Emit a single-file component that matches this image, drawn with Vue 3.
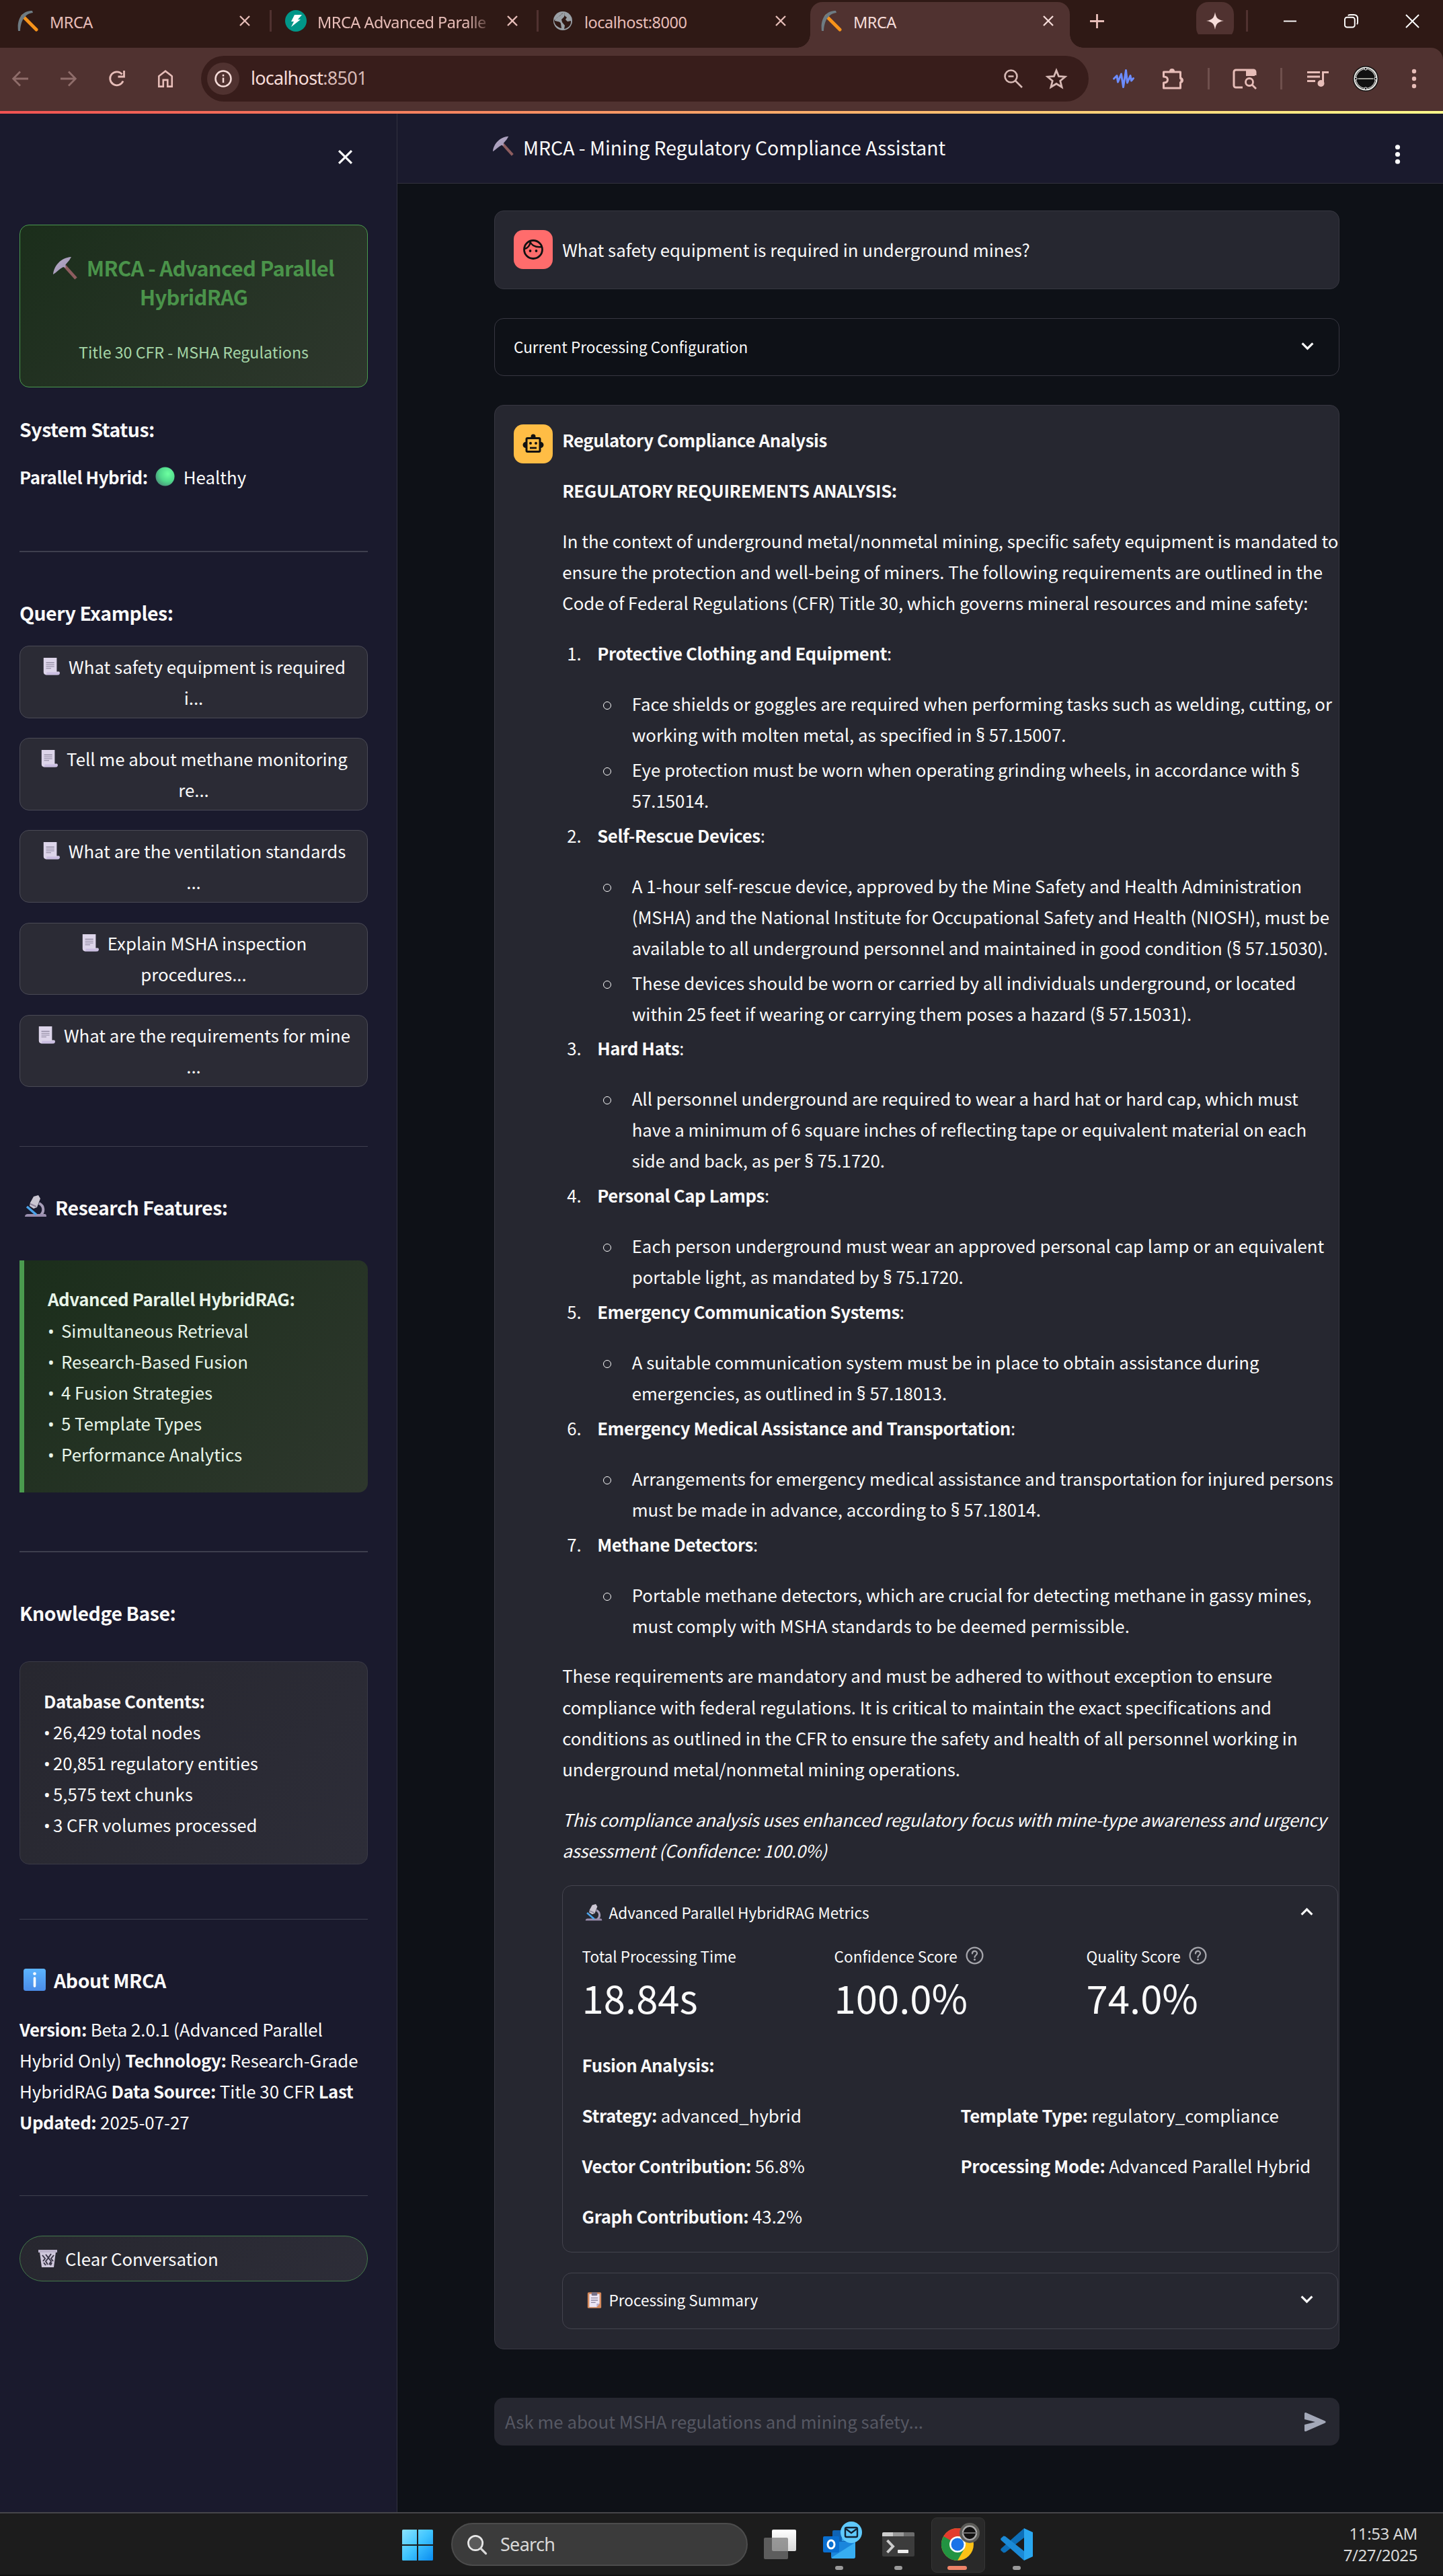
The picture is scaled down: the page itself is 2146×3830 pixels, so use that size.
<script setup>
const tabs = [
  { title: 'MRCA', icon: 'pick-tab', cls: 't1' },
  { title: 'MRCA Advanced Paralle', icon: 'bolt', cls: 't2' },
  { title: 'localhost:8000', icon: 'globe', cls: 't3' },
  { title: 'MRCA', icon: 'pick-tab', cls: 'active' },
]

const examples = [
  ['What safety equipment is required', 'i...'],
  ['Tell me about methane monitoring', 're...'],
  ['What are the ventilation standards', '...'],
  ['Explain MSHA inspection', 'procedures...'],
  ['What are the requirements for mine', '...'],
]

const features = ['Simultaneous Retrieval', 'Research-Based Fusion', '4 Fusion Strategies', '5 Template Types', 'Performance Analytics']
const database = ['26,429 total nodes', '20,851 regulatory entities', '5,575 text chunks', '3 CFR volumes processed']

const requirements = [
  { title: 'Protective Clothing and Equipment', items: [
    ['Face shields or goggles are required when performing tasks such as welding, cutting, or', 'working with molten metal, as specified in § 57.15007.'],
    ['Eye protection must be worn when operating grinding wheels, in accordance with §', '57.15014.'],
  ] },
  { title: 'Self-Rescue Devices', items: [
    ['A 1-hour self-rescue device, approved by the Mine Safety and Health Administration', '(MSHA) and the National Institute for Occupational Safety and Health (NIOSH), must be', 'available to all underground personnel and maintained in good condition (§ 57.15030).'],
    ['These devices should be worn or carried by all individuals underground, or located', 'within 25 feet if wearing or carrying them poses a hazard (§ 57.15031).'],
  ] },
  { title: 'Hard Hats', items: [
    ['All personnel underground are required to wear a hard hat or hard cap, which must', 'have a minimum of 6 square inches of reflecting tape or equivalent material on each', 'side and back, as per § 75.1720.'],
  ] },
  { title: 'Personal Cap Lamps', items: [
    ['Each person underground must wear an approved personal cap lamp or an equivalent', 'portable light, as mandated by § 75.1720.'],
  ] },
  { title: 'Emergency Communication Systems', items: [
    ['A suitable communication system must be in place to obtain assistance during', 'emergencies, as outlined in § 57.18013.'],
  ] },
  { title: 'Emergency Medical Assistance and Transportation', items: [
    ['Arrangements for emergency medical assistance and transportation for injured persons', 'must be made in advance, according to § 57.18014.'],
  ] },
  { title: 'Methane Detectors', items: [
    ['Portable methane detectors, which are crucial for detecting methane in gassy mines,', 'must comply with MSHA standards to be deemed permissible.'],
  ] },
]

const metrics = [
  { label: 'Total Processing Time', value: '18.84s', help: false },
  { label: 'Confidence Score', value: '100.0%', help: true },
  { label: 'Quality Score', value: '74.0%', help: true },
]
</script>

<template>
  <div class="screen">
    <svg class="defs" width="0" height="0">
      <defs>
        <linearGradient id="steel" x1="0" y1="0" x2="1" y2="1"><stop offset="0" stop-color="#b9adc9" /><stop offset="1" stop-color="#9a8fb0" /></linearGradient>
        <linearGradient id="win" x1="0" y1="0" x2="1" y2="1"><stop offset="0" stop-color="#8be4ff" /><stop offset="0.5" stop-color="#3fc4ff" /><stop offset="1" stop-color="#0a8cf0" /></linearGradient>
        <linearGradient id="info" x1="0" y1="0" x2="0" y2="1"><stop offset="0" stop-color="#5cb4ff" /><stop offset="1" stop-color="#4a8ce8" /></linearGradient>
        <radialGradient id="green" cx=".65" cy=".35" r=".7"><stop offset="0" stop-color="#6dffa0" /><stop offset=".6" stop-color="#50d98c" /><stop offset="1" stop-color="#4b9a7c" /></radialGradient>
        <linearGradient id="white" x1="0" y1="0" x2="0" y2="1"><stop offset="0" stop-color="#ffffff" /><stop offset="1" stop-color="#d8d8d8" /></linearGradient>
      </defs>
      <symbol id="pick-tab" viewBox="0 0 32 32"><path d="M8 9 28 29" stroke="#f7931a" stroke-width="5" stroke-linecap="round" /><path d="M1 31C-1 14 6 1 22 1l1 3C13 5 5 13 4 31z" fill="#6d7b83" /></symbol>
      <symbol id="pick" viewBox="0 0 36 36"><path d="M16 13 34 33" stroke="#8d5d5f" stroke-width="4.600" /><path d="M0 27C1 15 11 2 27 1L24 6l-6 7 1 4-4-1C9 19 5 24 0 27z" fill="url(#steel)" /></symbol>
      <symbol id="bolt" viewBox="0 0 32 32"><circle cx="16" cy="16" r="16" fill="#009688" /><path d="M14 7h11l-6 7h4L9 25l4-8H9z" fill="#fff" /></symbol>
      <symbol id="globe" viewBox="0 0 32 32"><circle cx="16" cy="16" r="14" fill="#9aa0a6" /><path d="M17 4c-5 2-3 4-6 5-3 2-7 4-7 7 5 1 8 1 9 4l1 7c-6-1-11-6-11-12M19 4c-2 4 1 5 3 7l-2 3 3 3 5-1c1 6-4 11-10 12l1-5-4-5-1-4 4-4z" fill="#2f1915" /></symbol>
      <symbol id="x" viewBox="0 0 20 20"><path d="M3 3l14 14M17 3 3 17" fill="none" stroke="currentColor" stroke-width="2.300" /></symbol>
      <symbol id="chev" viewBox="0 0 20 20"><path d="M2.500 6 10 13.500 17.500 6" fill="none" stroke="currentColor" stroke-width="3" /></symbol>
      <symbol id="dots" viewBox="0 0 24 24"><circle cx="12" cy="6" r="2" /><circle cx="12" cy="12" r="2" /><circle cx="12" cy="18" r="2" /></symbol>
      <symbol id="scroll" viewBox="0 0 30 30"><path d="M3 1h21v22h4c1 5-2 5-4 5H8c-3 0-5-1-5-4z" fill="#ddd5ea" /><path d="M8 24h21c0 3-1 4.500-4 4.500H5c2 0 3-2 3-4.500z" fill="#cbbfe2" /><path d="M7 9h13M7 12h13M7 15h13M7 18h8" stroke="#8a849b" stroke-width="1.200" /></symbol>
      <symbol id="scope" viewBox="0 0 34 34"><path d="M22 12c8 4 8 13 2 18" fill="none" stroke="#a79db8" stroke-width="4" /><path d="M1 32c0-3 2-4 4-4h25c3 0 3 2 3 4z" fill="#9a8eae" /><path d="M4 17l14 12" stroke="#4aa3ea" stroke-width="3.500" /><path d="M14 2l7-2 3 5-5 13-5 2-6-4 1-5z" fill="#cbc6d2" /><path d="M9 13l9 4" stroke="#8f849c" stroke-width="2" /></symbol>
      <symbol id="clip" viewBox="0 0 26 30"><rect x="1" y="1" width="24" height="28" rx="2" fill="#d58a5c" /><path d="M4 4h18v17l-5 6H4z" fill="#ece6f4" /><path d="M17 27v-6h5z" fill="#b8add0" /><rect x="8" y="1" width="10" height="6" rx="1.500" fill="#77728a" /><path d="M7 11h12M7 15h12M7 19h8" stroke="#8c86a0" stroke-width="1.500" /></symbol>
      <symbol id="bin" viewBox="0 0 30 28"><path d="M3 4 6 27h18L27 4z" fill="#cfc8dc" /><path d="M7 9l4 5-3 4M12 8l4 5-4 5 3 5M20 7l-4 6 4 5-3 5M24 9l-4 5 3 4M9 20l3 4M21 20l-2 4" stroke="#3b3748" stroke-width="2" fill="none" /><path d="M1 1h28v4H1z" fill="#bdb4cc" /></symbol>
      <symbol id="help" viewBox="0 0 28 28"><circle cx="14" cy="14" r="12.300" fill="none" stroke="#a5a5ab" stroke-width="2.400" /><path d="M10.300 11c0-5 7.400-5 7.400-.3 0 2.800-3.700 2.800-3.700 6" fill="none" stroke="#a5a5ab" stroke-width="2.300" stroke-linecap="round" /><circle cx="14" cy="20.300" r="1.600" fill="#a5a5ab" /></symbol>
      <symbol id="badge" viewBox="0 0 40 40"><circle cx="20" cy="20" r="20" fill="#111" /><circle cx="20" cy="20" r="16.500" fill="none" stroke="#e4e4e0" stroke-width="4" /><circle cx="20" cy="20" r="16" fill="none" stroke="#333" stroke-width="1" /><path d="M8 20h24" stroke="#b8b8b0" stroke-width="1.800" /><circle cx="20" cy="4.500" r="2" fill="#111" stroke="#fff" /><circle cx="20" cy="35.500" r="2" fill="#111" stroke="#fff" /><circle cx="4.500" cy="20" r="2" fill="#111" stroke="#fff" /><circle cx="35.500" cy="20" r="2" fill="#111" stroke="#fff" /></symbol>
    </svg>

    <header class="tabstrip">
      <template v-for="(t, i) in tabs" :key="i">
        <div class="tab" :class="t.cls">
          <svg class="fav"><use :href="'#' + t.icon" /></svg>
          <span class="tab-title">{{ t.title }}</span>
          <svg class="tab-x"><use href="#x" /></svg>
        </div>
        <i v-if="i < 2" class="tab-sep"></i>
      </template>
      <div class="newtab"><svg viewBox="0 0 22 22"><path d="M11 0v22M0 11h22" stroke="currentColor" stroke-width="3" /></svg></div>
      <div class="spark"><svg viewBox="0 0 26 26"><path d="M13 0c1.500 9 4 11.500 13 13-9 1.500-11.500 4-13 13C11.500 17 9 14.500 0 13 9 11.500 11.500 9 13 0z" fill="#f6dcd9" /></svg></div>
      <i class="win-sep"></i>
      <div class="win"><svg viewBox="0 0 22 22"><path d="M1 11h20" stroke="#fff" stroke-width="2" /></svg></div>
      <div class="win"><svg viewBox="0 0 22 22"><rect x="1" y="5" width="15.500" height="15.500" rx="3.500" fill="none" stroke="#fff" stroke-width="2" /><path d="M6 2c1-.8 2-1 4-1h5c4 0 6 2 6 6v5c0 2-.2 3-1 4" fill="none" stroke="#fff" stroke-width="2" /></svg></div>
      <div class="win"><svg viewBox="0 0 22 22"><path d="M1 1l20 20M21 1 1 21" stroke="#fff" stroke-width="2" /></svg></div>
    </header>

    <nav class="toolbar">
      <div class="tool dim"><svg viewBox="0 0 24 24"><path d="M24 12H2M12 1.500 1.700 12 12 22.500" /></svg></div>
      <div class="tool dim"><svg viewBox="0 0 24 24"><path d="M0 12h22M12 1.500 22.300 12 12 22.500" /></svg></div>
      <div class="tool"><svg viewBox="0 0 24 24"><path d="M21 15.500A10 10 0 1 1 19.500 5.500M22.500 0v9h-9" /></svg></div>
      <div class="tool"><svg viewBox="0 0 24 28"><path d="M1.500 26.500V10L12 1.800 22.500 10v16.500h-7V16h-7v10.500z" /></svg></div>
      <div class="address">
        <div class="site"><svg viewBox="0 0 26 26"><circle cx="13" cy="13" r="11.500" fill="none" stroke="#f6dcd9" stroke-width="2.500" /><path d="M13 11.500v7.500M13 6.800v2.600" stroke="#f6dcd9" stroke-width="2.500" /></svg></div>
        <span class="url">localhost<em>:8501</em></span>
        <svg class="mag" viewBox="0 0 28 28"><circle cx="10.500" cy="10.500" r="9" /><path d="M17 17l10 10M6.500 10.500h8" /></svg>
        <svg class="star" viewBox="0 0 30 30"><path d="M15 3.500l3.300 8.200 8.900.7-6.800 5.700 2.200 8.600L15 22l-7.600 4.700 2.200-8.600-6.800-5.700 8.900-.7z" /></svg>
      </div>
      <div class="ext c104"><svg viewBox="0 0 32 28" class="wave"><path d="M1.500 14 6 9.500 7.500 19 12.500 7 15.500 26.500 19.500 1.500 21.500 20 26 9.500 27.500 17 30.500 13.500" fill="none" stroke="#6c8cff" stroke-width="3" stroke-linecap="round" stroke-linejoin="round" /></svg></div>
      <div class="ext c42"><svg viewBox="0 0 32 34" class="puz"><path d="M2 7h25v9.500a3 3 0 0 1 0 6V31H2v-8c4 0 6-2 6-4.500S6 14 2 14z" fill="none" stroke="#e7bdb8" stroke-width="3" stroke-linejoin="round" /><path d="M10.500 6a4 4 0 0 1 8 0zM27 15a4 4 0 0 1 0 8z" fill="#e7bdb8" /></svg></div>
      <div class="ext c64"><i></i></div>
      <div class="ext c44"><svg viewBox="0 0 36 30" class="pan"><path d="M15 28H5a3 3 0 0 1-3-3V5a3 3 0 0 1 3-3h26a3 3 0 0 1 3 3v5" fill="none" stroke="#e7bdb8" stroke-width="3" /><path d="M20 3h13v8H20z" fill="#e7bdb8" /><circle cx="25" cy="20" r="5.500" fill="none" stroke="#e7bdb8" stroke-width="2.800" /><path d="M29 24l6 6" stroke="#e7bdb8" stroke-width="2.800" /></svg></div>
      <div class="ext c64"><i></i></div>
      <div class="ext c46"><svg viewBox="0 0 32 24" class="mus"><path d="M0 2.500h19M0 9h19M0 15.500h12M23.500 19V2.500H32" fill="none" stroke="#e7bdb8" stroke-width="3" /><circle cx="20.500" cy="19" r="5" fill="#e7bdb8" /></svg></div>
      <div class="ext c96"><svg class="ava"><use href="#badge" /></svg></div>
      <div class="ext c48"><svg viewBox="0 0 8 30" class="kebab"><circle cx="4" cy="4" r="3.200" /><circle cx="4" cy="15" r="3.200" /><circle cx="4" cy="26" r="3.200" /></svg></div>
    </nav>
    <div class="rainbow"></div>

    <div class="page">
      <aside class="side">
        <div class="side-top"><svg><use href="#x" /></svg></div>
        <section class="brand">
          <h2><svg><use href="#pick" /></svg>MRCA - Advanced Parallel<br />HybridRAG</h2>
          <p>Title 30 CFR - MSHA Regulations</p>
        </section>
        <h3 class="h-status">System Status:</h3>
        <p class="status"><b>Parallel Hybrid:</b><svg viewBox="0 0 30 30"><circle cx="15" cy="15" r="14.500" fill="url(#green)" /></svg>Healthy</p>
        <hr class="g88" />
        <h3>Query Examples:</h3>
        <div class="examples">
          <button v-for="e in examples" :key="e[0]"><svg><use href="#scroll" /></svg>{{ e[0] }}<br />{{ e[1] }}</button>
        </div>
        <hr class="g88" />
        <h3><svg class="scope"><use href="#scope" /></svg>Research Features:</h3>
        <section class="features">
          <b>Advanced Parallel HybridRAG:</b>
          <div v-for="f in features" :key="f"><i class="bul">•</i>{{ f }}</div>
        </section>
        <hr class="g88" />
        <h3>Knowledge Base:</h3>
        <section class="database">
          <b>Database Contents:</b>
          <div v-for="d in database" :key="d"><i class="bul">•</i>{{ d }}</div>
        </section>
        <hr class="g81" />
        <h3><svg class="info" viewBox="0 0 33 33"><rect width="33" height="33" rx="3.500" fill="url(#info)" /><circle cx="16.500" cy="7.500" r="2.300" fill="#fff" /><path d="M16.500 14v12" stroke="#fff" stroke-width="3.600" stroke-linecap="round" /></svg>About MRCA</h3>
        <p class="about"><b>Version:</b> Beta 2.0.1 (Advanced Parallel<br />Hybrid Only) <b>Technology:</b> Research-Grade<br />HybridRAG <b>Data Source:</b> Title 30 CFR <b>Last<br />Updated:</b> 2025-07-27</p>
        <hr class="g86" />
        <button class="clear"><svg><use href="#bin" /></svg>Clear Conversation</button>
      </aside>

      <main class="main">
        <div class="topbar">
          <svg class="pick"><use href="#pick" /></svg><span>MRCA - Mining Regulatory Compliance Assistant</span>
          <svg class="menu"><use href="#dots" /></svg>
        </div>
        <div class="chat">
          <div class="card ask">
            <div class="avatar user"><svg viewBox="0 0 32 32"><circle cx="16" cy="16" r="13.500" fill="none" stroke="#111" stroke-width="2.800" /><circle cx="11.500" cy="18" r="1.900" fill="#111" /><circle cx="20.500" cy="18" r="1.900" fill="#111" /><path d="M3 15c5-1 8-5 9-11M11 4c3 7 9 9 18 8" fill="none" stroke="#111" stroke-width="2.400" /></svg></div>
            <p>What safety equipment is required in underground mines?</p>
          </div>
          <div class="expander config"><span>Current Processing Configuration</span><svg><use href="#chev" /></svg></div>
          <div class="card answer">
            <div class="avatar bot"><svg viewBox="0 0 32 32"><rect x="6" y="7.500" width="20" height="20" rx="1.500" fill="none" stroke="#111" stroke-width="3" /><circle cx="16" cy="5" r="3.500" fill="#111" /><path d="M5 13a4.500 4.500 0 0 0 0 9zM27 13a4.500 4.500 0 0 1 0 9z" fill="#111" /><circle cx="12" cy="15" r="2" fill="#111" /><circle cx="20" cy="15" r="2" fill="#111" /><path d="M11 22h10" stroke="#111" stroke-width="2.800" /></svg></div>
            <div class="body">
              <p><b>Regulatory Compliance Analysis</b></p>
              <p><b>REGULATORY REQUIREMENTS ANALYSIS:</b></p>
              <p>In the context of underground metal/nonmetal mining, specific safety equipment is mandated to<br />ensure the protection and well-being of miners. The following requirements are outlined in the<br />Code of Federal Regulations (CFR) Title 30, which governs mineral resources and mine safety:</p>
              <ol>
                <li v-for="(r, n) in requirements" :key="n">
                  <div class="req"><span>{{ n + 1 }}.</span><div><b>{{ r.title }}</b>:</div></div>
                  <ul>
                    <li v-for="(item, k) in r.items" :key="k">
                      <div v-for="line in item" :key="line"><template v-for="(part, j) in line.split('§')" :key="j"><span v-if="j" class="sec">§</span>{{ part }}</template></div>
                    </li>
                  </ul>
                </li>
              </ol>
              <p>These requirements are mandatory and must be adhered to without exception to ensure<br />compliance with federal regulations. It is critical to maintain the exact specifications and<br />conditions as outlined in the CFR to ensure the safety and health of all personnel working in<br />underground metal/nonmetal mining operations.</p>
              <p class="note">This compliance analysis uses enhanced regulatory focus with mine-type awareness and urgency<br />assessment (Confidence: 100.0%)</p>
              <section class="metrics">
                <div class="sum"><svg class="scope"><use href="#scope" /></svg><span>Advanced Parallel HybridRAG Metrics</span><svg class="chev up"><use href="#chev" /></svg></div>
                <div class="nums">
                  <div v-for="m in metrics" :key="m.label">
                    <div class="lab">{{ m.label }}<svg v-if="m.help"><use href="#help" /></svg></div>
                    <div class="val">{{ m.value }}</div>
                  </div>
                </div>
                <p class="fusion"><b>Fusion Analysis:</b></p>
                <div class="pairs">
                  <div>
                    <p><b>Strategy:</b> advanced_hybrid</p>
                    <p><b>Vector Contribution:</b> 56.8%</p>
                    <p><b>Graph Contribution:</b> 43.2%</p>
                  </div>
                  <div>
                    <p><b>Template Type:</b> regulatory_compliance</p>
                    <p><b>Processing Mode:</b> Advanced Parallel Hybrid</p>
                  </div>
                </div>
              </section>
              <section class="summary"><div class="sum"><svg class="clip"><use href="#clip" /></svg><span>Processing Summary</span><svg class="chev"><use href="#chev" /></svg></div></section>
            </div>
          </div>
          <div class="prompt"><span>Ask me about MSHA regulations and mining safety...</span><svg viewBox="0 0 32 28"><path d="M2 0 30.500 12.500c1.600.8 1.600 2.200 0 3L2 28c-1 .3-2-.3-2-1.500V18l16-4L0 10V1.500C0 .3 1-.3 2 0z" fill="#a3a8b8" /></svg></div>
        </div>
      </main>
    </div>

    <footer class="taskbar">
      <svg class="winlogo" viewBox="0 0 46 46"><path d="M1.500 0H22v22H0V1.500Q0 0 1.500 0zM24 0h20.500Q46 0 46 1.500V22H24zM0 24h22v22H1.500Q0 46 0 44.500zM24 24h22v20.500q0 1.500-1.500 1.500H24z" fill="url(#win)" /></svg>
      <div class="search"><svg viewBox="0 0 30 30"><circle cx="12.500" cy="12.500" r="11" fill="#5a5a5a" stroke="#e8e8e8" stroke-width="2.800" /><path d="M20.500 20.500l8 8" stroke="#d8d8d8" stroke-width="3.400" stroke-linecap="round" /></svg><span>Search</span></div>
      <svg class="tview" viewBox="0 0 48 44"><rect x="12" y="0" width="36" height="32" rx="2" fill="url(#white)" /><rect x="0" y="12" width="36" height="32" rx="2" fill="#777" opacity=".72" /></svg>
      <div class="app outlook"><svg viewBox="0 0 60 56"><rect x="14" y="13" width="32" height="32" rx="2" fill="#0f63b5" /><rect x="28" y="14" width="17" height="15" fill="#2e9de6" /><path d="M12 30h36v22a3 3 0 0 1-3 3H15a3 3 0 0 1-3-3z" fill="#1a86dc" /><path d="M12 54 48 31v21a3 3 0 0 1-3 3H14z" fill="#37aef2" /><rect x="0" y="22" width="24" height="24" rx="2" fill="#0a6fd0" /><ellipse cx="12" cy="34" rx="5" ry="6" fill="none" stroke="#fff" stroke-width="3" /><circle cx="42" cy="16" r="16" fill="#5fc9fb" /><rect x="33" y="9" width="18" height="14" rx="2" fill="none" stroke="#112233" stroke-width="2.400" /><path d="M34 11l8 6 8-6" fill="none" stroke="#112233" stroke-width="2.400" /></svg><i></i></div>
      <div class="app term"><svg viewBox="0 0 48 36"><rect width="48" height="36" rx="2" fill="#3c3c3c" /><path d="M2 0h14v6H0V2q0-2 2-2z" fill="#ccc" /><path d="M16 0h16v6H16z" fill="#999" /><path d="M32 0h14q2 0 2 2v4H32z" fill="#6c6c6c" /><path d="M7.500 12 16 21l-8.500 9" fill="none" stroke="#ccc" stroke-width="4" /><rect x="23" y="26" width="16" height="5" rx="1" fill="#eee" /></svg><i></i></div>
      <div class="app chrome"><svg viewBox="0 0 58 56"><g transform="translate(0 8)"><circle cx="24" cy="24" r="24" fill="#fbc116" /><path d="M24 12h20.800A24 24 0 0 0 3.200 12L13.600 30z" fill="#e33b2e" /><path d="M3.200 12A24 24 0 0 0 24 48L34.400 30 24 34z" fill="#229342" /><path d="M3.200 12 13.600 30 24 24z" fill="#229342" /><circle cx="24" cy="24" r="12" fill="#fff" /><circle cx="24" cy="24" r="9.500" fill="#1a73e8" /></g><svg x="27" y="0" width="30" height="30" viewBox="0 0 40 40"><circle cx="20" cy="20" r="20" fill="#5c5c58" /><circle cx="20" cy="20" r="13.500" fill="#111" stroke="#aaa" stroke-width="3" /><path d="M6 20h28" stroke="#777" stroke-width="2.500" /></svg></svg><i></i></div>
      <div class="app code"><svg viewBox="0 0 48 48"><path d="M35 0 48 6v36l-13 6z" fill="#2aa7f0" /><path d="M35 0v14L7 36l-2.500.500L.500 33q-1-1.500.500-3z" fill="#0d6fb8" /><path d="M35 48V34L7 12l-2.500-.5L.500 15q-1 1.500.500 3z" fill="#1b8ad6" /></svg><i></i></div>
      <div class="clock"><div>11:53 AM</div><div>7/27/2025</div></div>
    </footer>
  </div>
</template>

<style>
body { background: #0e1117; }
</style>

<style scoped>
.screen { width: 2146px; height: 3830px; display: flex; flex-direction: column; overflow: hidden; background: #0e1117; color: #fafafa; font-family: "Noto Sans CJK SC", "Noto Sans", sans-serif; font-size: 25.800px; line-height: 46.080px; white-space: nowrap; }
.screen * { box-sizing: border-box; }
.defs { position: absolute; }
svg { flex: none; overflow: visible; }
p, h2, h3, ol, ul { margin: 0; padding: 0; list-style: none; }
b { font-weight: 600; letter-spacing: -0.016em; }
i { font-style: normal; }
button { font: inherit; color: inherit; line-height: inherit; white-space: nowrap; }

.tabstrip { height: 71px; flex: none; background: #2f1915; display: flex; font-family: "Noto Sans", sans-serif; font-size: 23.500px; letter-spacing: -0.500px; color: #e7bdb8; }
.tab { display: flex; align-items: center; height: 62px; }
.fav { width: 32px; height: 32px; margin-right: 16px; }
.tab-title { flex: 1; line-height: 40px; padding-top: 4px; }
.tab-x { width: 20px; height: 20px; }
.t1 { width: 401px; padding: 0 27px 0 26px; }
.t2 { width: 394px; padding: 0 26px 0 20px; }
.t2 .tab-title { -webkit-mask-image: linear-gradient(90deg, #000 222px, transparent 262px); mask-image: linear-gradient(90deg, #000 222px, transparent 262px); }
.t3 { width: 404px; padding: 0 34px 0 20px; }
.active { position: relative; width: 386px; padding: 0 22px 12px 16px; height: 68px; margin-top: 3px; border-radius: 18px 18px 0 0; background: #503230; color: #f6dcd9; }
.active::before, .active::after { content: ""; position: absolute; bottom: 0; width: 20px; height: 20px; }
.active::before { left: -20px; background: radial-gradient(circle at 0 0, transparent 19.500px, #503230 20px); }
.active::after { right: -20px; background: radial-gradient(circle at 100% 0, transparent 19.500px, #503230 20px); }
.tab-sep { width: 3px; height: 32px; margin-top: 15px; background: #503230; }
.newtab { width: 80px; height: 62px; display: grid; place-items: center; }
.newtab svg { width: 21px; height: 21px; }
.spark { margin: 3px 0 0 108px; width: 56px; height: 56px; border-radius: 18px; background: #503230; display: grid; place-items: center; }
.spark svg { width: 26px; height: 26px; }
.win-sep { width: 3px; height: 32px; margin: 15px 17px 0 18px; background: #503230; }
.win { width: 91px; height: 62px; display: grid; place-items: center; }
.win svg { width: 21px; height: 21px; }

.toolbar { height: 94px; flex: none; display: flex; align-items: center; background: #503230; padding-bottom: 3px; border-top-right-radius: 18px; box-shadow: 20px -20px 0 #2f1915; }
.tool { width: 72px; height: 91px; display: grid; place-items: center; color: #e7bdb8; }
.tool:first-child { margin-left: -6px; }
.tool svg { width: 24px; height: 26px; }
.tool path { fill: none; stroke: currentColor; stroke-width: 2.8; }
.tool.dim { color: #8f6d6a; }
.address { margin-left: 17px; width: 1320px; height: 68px; border-radius: 34px; background: #381d1b; display: flex; align-items: center; }
.site { margin-left: 9px; width: 48px; height: 48px; border-radius: 50%; background: #503230; display: grid; place-items: center; }
.site svg { width: 26px; height: 26px; }
.url { margin-left: 17px; font-family: "Noto Sans", sans-serif; font-size: 27px; letter-spacing: -0.750px; color: #f6dcd9; flex: 1; }
.url em { font-style: normal; color: #d8bab6; }
.mag { width: 28px; height: 28px; margin-right: 34px; }
.star { width: 32px; height: 32px; margin-right: 32px; }
.mag circle, .mag path, .star path { fill: none; stroke: #d8bab6; stroke-width: 2.600; }
.ext { height: 91px; display: grid; place-items: center; }
.ext i { width: 3px; height: 32px; background: #6f504d; }
.c104 { width: 104px; } .c42 { width: 42px; } .c64 { width: 64px; } .c44 { width: 44px; } .c46 { width: 46px; } .c96 { width: 96px; } .c48 { width: 48px; }
.wave { width: 32px; height: 28px; }
.puz { width: 33px; height: 34px; }
.pan { width: 36px; height: 30px; }
.mus { width: 32px; height: 24px; }
.ava { width: 38px; height: 38px; }
.kebab { width: 8px; height: 30px; fill: #e7bdb8; }
.rainbow { height: 4px; flex: none; background: linear-gradient(90deg, #f05252, #fdb46c 60%, #fdf98a); }

.page { height: 3566px; flex: none; display: flex; }
.side { width: 591px; background: #1a1a2d; border-right: 1px solid #32323f; padding: 0 43px 0 29px; display: flex; flex-direction: column; }
.side > * { flex: none; }
.side-top { height: 165px; padding: 51px 20px 0 0; text-align: right; line-height: 0; }
.side-top svg { width: 27px; height: 27px; color: #fafafa; }
.brand { height: 242px; border: 1.800px solid #4a9a4e; border-radius: 14px; padding-top: 42px; text-align: center; background: linear-gradient(135deg, #1b2e1b, #2e372d); }
.brand h2 { font-size: 30.960px; letter-spacing: -0.660px; font-weight: 600; line-height: 42.500px; color: #4a934a; }
.brand h2 svg { width: 36px; height: 36px; margin: 0 14px -6px 0; }
.brand p { margin-top: 37.500px; font-size: 23.200px; color: #a5d6a7; }
h3 { height: 40px; line-height: 43px; font-size: 28.450px; letter-spacing: -0.016em; font-weight: 600; margin-top: 68px; }
.h-status { margin-top: 40px; }
.status { margin-top: 29.700px; display: flex; align-items: center; }
.status svg { width: 29px; height: 29px; margin: 0 13px 0 11px; }
hr { width: 100%; margin: 0; border: 0; height: 1.500px; background: #3e3f4e; }
.g88 { margin-top: 87.500px; } .g86 { margin-top: 85.500px; } .g81 { margin-top: 80.500px; }
.examples { margin-top: 31.500px; display: flex; flex-direction: column; gap: 29.400px; }
.examples button { height: 107.700px; border: 1.800px solid #4a4a55; border-radius: 14px; background: #2b2b35; padding: 0 0 1px; text-align: center; }
.examples svg { width: 28px; height: 28px; margin: 0 12px -3px 0; }
h3 svg.scope { width: 34px; height: 34px; margin: 0 12px -4px 7px; }
h3 svg.info { width: 33px; height: 33px; margin: 0 12px -4px 6px; }
.features { margin-top: 60.500px; height: 345px; border-left: 7.200px solid #4a9a4e; border-radius: 0 14px 14px 0; padding: 34.700px 0 0 35px; color: #e8f5e9; background: linear-gradient(135deg, #1b2e1b, #2e372d); }
.bul { font-family: "Noto Sans", sans-serif; line-height: 0; display: inline-block; }
.features .bul { width: 20px; }
.database { margin-top: 54.500px; height: 302px; border: 1.800px solid #3a3a46; border-radius: 14px; padding: 34.700px 0 0 35px; background: linear-gradient(135deg, #27272f, #2d2d38); }
.database .bul { width: 14px; }
.about { margin-top: 31.700px; }
.clear { margin-top: 58.500px; height: 68px; border: 1.800px solid #43784a; border-radius: 34px; background: linear-gradient(135deg, #27272f, #2d2d38); display: flex; align-items: center; padding: 0 0 0 26px; }
.clear svg { width: 30px; height: 28px; margin-right: 11px; }

.main { width: 1555px; background: #0e1117; }
.topbar { height: 104px; background: #1a1a2d; border-bottom: 1.800px solid #32323f; display: flex; padding: 33px 49px 0 142px; font-size: 28.380px; }
.topbar .pick { width: 31px; height: 31px; margin-right: 14px; }
.topbar span { flex: 1; line-height: 33px; }
.topbar .menu { width: 43px; height: 43px; fill: #fafafa; margin: 6px -3px 0 0; }
.chat { margin: 40px 0 0 144px; width: 1257px; }
.card { border: 1.800px solid #373741; border-radius: 14px; background: #262730; display: flex; padding: 28.200px 0 0 28.200px; }
.avatar { width: 57.600px; height: 57.600px; border-radius: 14px; flex: none; display: grid; place-items: center; }
.avatar svg { width: 32px; height: 32px; }
.user { background: #ff6c6c; } .bot { background: #ffbd45; }
.ask { height: 117px; }
.ask p { margin: 6px 0 0 14.400px; }
.expander { margin-top: 43px; height: 86px; border: 1.800px solid #373741; border-radius: 14px; display: flex; justify-content: space-between; padding: 18px 36px 0 28px; font-size: 22.570px; }
.expander svg { width: 21px; height: 21px; margin-top: 12px; }
.expander span { padding-top: 1px; }
.answer { margin-top: 43px; height: 2891px; }
.body { margin-left: 14.400px; flex: 1; min-width: 0; }
.body > p { margin-bottom: 28.800px; }
ol > li + li, ul > li + li { margin-top: 5.760px; }
.req { display: flex; padding-left: 7px; }
.req span { width: 45px; }
ul { margin-top: 28.800px; padding-left: 103.500px; }
ul > li { position: relative; }
ul > li::before { content: ""; position: absolute; left: -43px; top: 20px; width: 10px; height: 10px; border: 1.500px solid #fafafa; border-radius: 50%; }
ol { margin-bottom: 28.800px; }
.sec { font-family: "Noto Sans", sans-serif; font-size: 27px; line-height: 0; }
.body > .note { font-style: italic; letter-spacing: -0.245px; }
.metrics { width: 1154px; height: 546px; border: 1.800px solid #44444e; border-radius: 14px; padding: 20.500px 0 0 28.400px; }
.sum { display: flex; align-items: center; height: 40px; line-height: 40px; font-size: 22.570px; }
.sum span { flex: 1; }
.sum .scope { width: 26px; height: 26px; margin: 0 10px 0 4px; }
.sum .clip { width: 22px; height: 26px; margin: 0 11px 0 7px; }
.chev { width: 21px; height: 21px; margin: -3px 35px 0 0; }
.up { transform: rotate(180deg); }
.nums { display: grid; grid-template-columns: 375px 375px 375px; margin-top: 24.500px; }
.lab { font-size: 22.570px; height: 40px; line-height: 40px; display: flex; align-items: center; }
.lab svg { width: 27px; height: 27px; margin: -2px 0 0 12px; }
.val { font-size: 58.050px; line-height: 80px; height: 80px; }
.fusion { margin-top: 38.500px; }
.pairs { display: grid; grid-template-columns: 563px 1fr; margin-top: 28.800px; }
.pairs p + p { margin-top: 28.800px; }
.summary { width: 1154px; height: 84px; margin-top: 30px; border: 1.800px solid #44444e; border-radius: 14px; padding: 20px 0 0 28.400px; }
.prompt { margin-top: 72px; height: 71px; border-radius: 14px; background: #262730; color: #565863; display: flex; align-items: center; padding: 0 20px 0 16px; }
.prompt span { flex: 1; }
.prompt svg { width: 32px; height: 28px; }

.taskbar { height: 95px; flex: none; background: #1c1c1c; border-top: 2px solid #454549; border-bottom: 2px solid #111; display: flex; padding-left: 598px; font-family: "Noto Sans", sans-serif; color: #d8d8d8; }
.winlogo { width: 46px; height: 46px; margin-top: 24px; }
.search { margin: 14px 0 0 27px; width: 441px; height: 64px; border-radius: 32px; background: #3b3b3b; border: 2px solid #4c4c4c; display: flex; align-items: center; padding-left: 22px; font-size: 27px; letter-spacing: -0.700px; }
.search svg { width: 29px; height: 29px; margin-right: 20px; }
.tview { width: 48px; height: 44px; margin: 24px 0 0 24px; }
.app { position: relative; width: 88px; height: 91px; }
.app svg { position: absolute; left: 20px; }
.app > i { position: absolute; left: 38px; top: 78px; width: 12px; height: 6px; border-radius: 3px; background: #9a9a9a; }
.outlook { margin-left: 20px; }
.outlook svg { width: 60px; height: 56px; top: 12px; }
.term svg { width: 48px; height: 36px; top: 28px; }
.chrome::before { content: ""; position: absolute; left: 5px; top: 6px; width: 78px; height: 80px; border-radius: 8px; background: #292929; border: 1px solid #353535; }
.chrome > svg { width: 58px; height: 56px; top: 14px; }
.chrome > i { left: 29px; width: 29px; background: #ee8368; }
.code svg { width: 48px; height: 48px; top: 22px; }
.clock { margin-left: auto; padding: 14px 38px 0 0; text-align: right; font-size: 24px; letter-spacing: -0.400px; line-height: 32px; }
</style>
